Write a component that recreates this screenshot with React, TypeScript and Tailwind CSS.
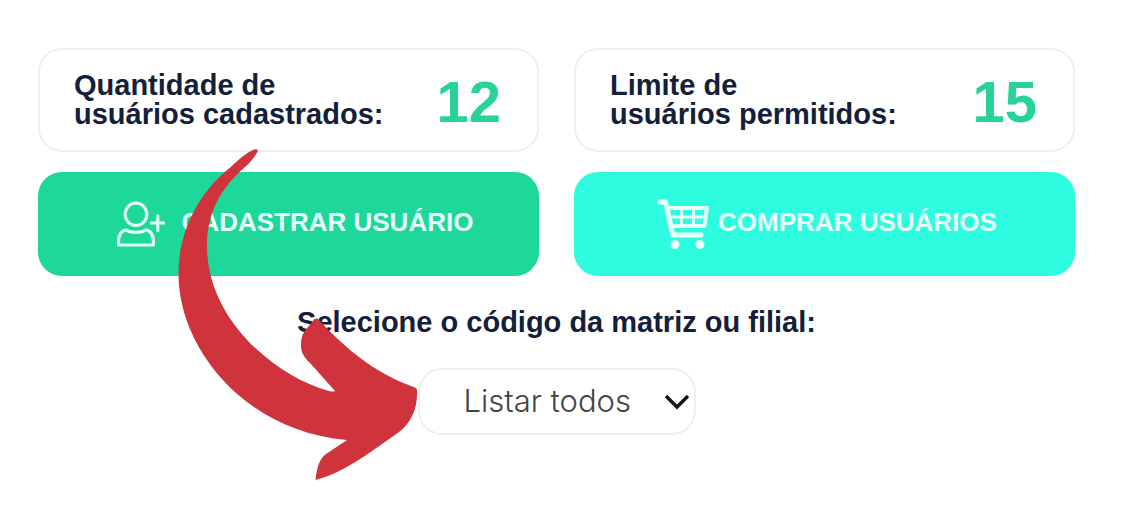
import { useState } from 'react';

const BRANCHES = [{ value: 'all', label: 'Listar todos' }];

function CounterCard({ title, subtitle, value }: { title: string; subtitle: string; value: number }) {
  return (
    <div className="flex h-26 items-center justify-between rounded-3xl border-2 border-[#efefef] bg-white pl-[34px] pr-9">
      <p className="text-[29px] leading-[29px] font-bold text-[#14203a]">
        {title}
        <br />
        {subtitle}
      </p>
      <span className="pt-1 text-[58px] leading-[60px] font-bold text-[#27d397]">{value}</span>
    </div>
  );
}

function AddUserIcon() {
  return (
    <svg className="h-12 w-[50px] shrink-0" viewBox="0 0 50 48" fill="none" stroke="currentColor" strokeWidth="3">
      <ellipse cx="20" cy="14.2" rx="10.8" ry="11.3" />
      <path d="M10 30C14 33 26 33 30 30C36 31 38 36 37.5 45H2.5C2 36 4 31 10 30Z" strokeLinejoin="round" />
      <path d="M34 23H49M41.8 14.5V32" />
    </svg>
  );
}

function CartIcon() {
  return (
    <svg className="h-[52px] w-[54px] shrink-0" viewBox="0 0 54 52" fill="none" stroke="currentColor">
      <path d="M4 4H9.500L17 37H45" strokeWidth="5" strokeLinecap="round" strokeLinejoin="round" />
      <path d="M11 10H51L48.500 28H15" strokeWidth="4" strokeLinejoin="round" />
      <path d="M13 19H49M25.500 10V28M37.500 10V28" strokeWidth="3" />
      <circle cx="19" cy="46.5" r="4.5" fill="currentColor" stroke="none" />
      <circle cx="44" cy="46.5" r="4.5" fill="currentColor" stroke="none" />
    </svg>
  );
}

function PointerArrow() {
  return (
    <svg
      className="pointer-events-none absolute top-[148px] left-[178px] h-[334px] w-[241px]"
      viewBox="178 148 241 334"
      aria-hidden="true"
    >
      <path
        fill="#cf333b"
        d="M258 151C257 149 256 149 253 150C242 155 235 164 226 171C197 196 178.500 233 178.500 274C178.500 349 246 432 347 440L326 454C319 459 317 468 315.500 480C346 472 373 450 399 432C411 423 418 408 417 390C417 388 414 387 411 386C374 372 347 350 319 320C317 318 315 318 313 321C306 330 301 332 301 346C301 354 306 359 310 363L335 391Q334 392 329 391C279 378 207 322 207 246C207 211 222 187 245 167C251 162 255 156 258 151Z"
      />
    </svg>
  );
}

export default function App() {
  const [branch, setBranch] = useState('all');

  return (
    <main className="relative bg-white pt-12 pr-[58px] pb-20 pl-[38px] font-['Liberation_Sans',Arial,sans-serif]">
      <div className="grid grid-cols-2 gap-x-[35px] gap-y-5">
        <CounterCard title="Quantidade de" subtitle="usuários cadastrados:" value={12} />
        <CounterCard title="Limite de" subtitle="usuários permitidos:" value={15} />
        <button
          type="button"
          className="flex h-26 items-center justify-center gap-4 rounded-3xl bg-[#1dd79b] pl-3 text-[26px] font-bold text-[#e6fff8]"
        >
          <AddUserIcon />
          <span className="pb-1 whitespace-nowrap">CADASTRAR USUÁRIO</span>
        </button>
        <button
          type="button"
          className="flex h-26 items-center justify-center gap-2 rounded-3xl bg-[#2efce0] pl-1 text-[26px] font-bold text-[#e6fff8]"
        >
          <CartIcon />
          <span className="pb-1 whitespace-nowrap">COMPRAR USUÁRIOS</span>
        </button>
      </div>

      <div className="mt-[30px] flex flex-col items-center gap-[30px]">
        <label htmlFor="branch" className="text-[29px] leading-8 font-bold text-[#14203a]">
          Selecione o código da matriz ou filial:
        </label>
        <div className="relative">
          <select
            id="branch"
            value={branch}
            onChange={e => setBranch(e.target.value)}
            className="h-[67px] w-[278px] appearance-none rounded-3xl border-2 border-[#efefef] bg-white pr-12 pl-11 font-[Inter,sans-serif] text-[31px] font-light text-[#444]"
          >
            {BRANCHES.map(b => (
              <option key={b.value} value={b.value}>{b.label}</option>
            ))}
          </select>
          <svg
            className="pointer-events-none absolute top-[26px] right-1.5 h-4 w-[26px]"
            viewBox="0 0 26 16"
            fill="none"
            stroke="#161616"
            strokeWidth="3.500"
          >
            <path d="M2 2L13 13L24 2" />
          </svg>
        </div>
      </div>

      <PointerArrow />
    </main>
  );
}
